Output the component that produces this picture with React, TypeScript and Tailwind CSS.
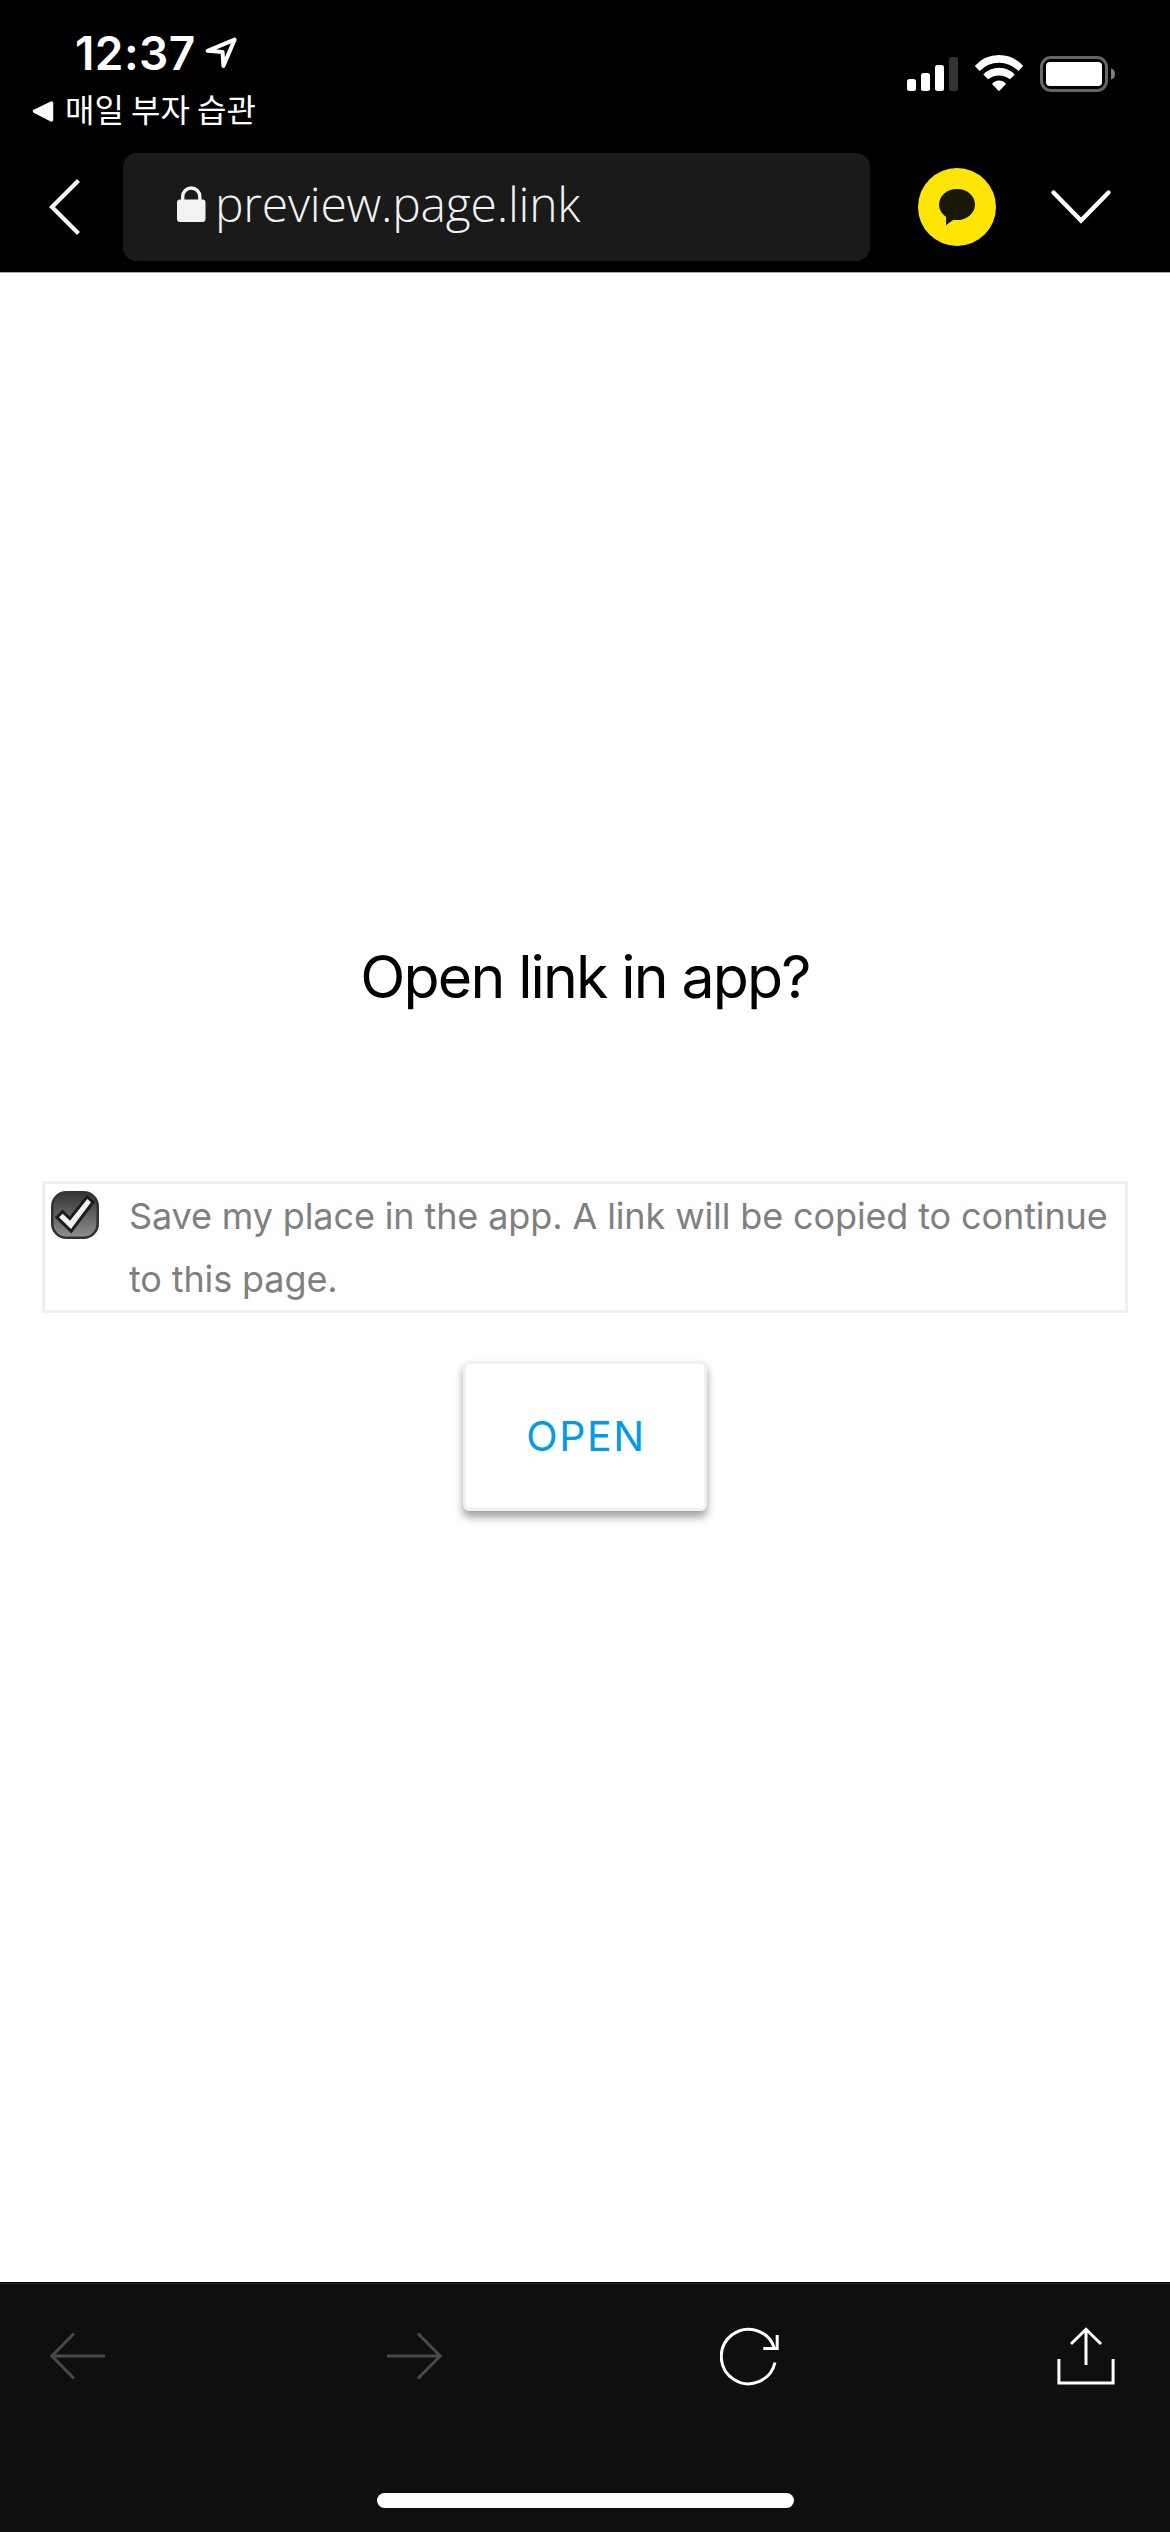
import type { ReactNode } from 'react';

type IconProps = { w: number; h: number; className?: string; children: ReactNode };

function Icon({ w, h, className = '', children }: IconProps) {
  return (
    <svg width={w} height={h} viewBox={`0 0 ${w} ${h}`} fill="none" className={`block shrink-0 ${className}`} aria-hidden="true">
      {children}
    </svg>
  );
}

function StatusBar() {
  return (
    <div className="flex h-[140px] justify-between">
      <div className="pt-[28px]">
        <div className="flex pl-[75px]">
          <span className="w-[129px] text-[46px] leading-[50px] font-semibold tracking-[0.4px]">12:37</span>
          {/* location arrow */}
          <Icon w={36} h={36} className="mt-[7px]">
            <path d="M3.6 15.8 30.6 4.6 19.4 31 18.6 17Z" stroke="#fff" strokeWidth="4" strokeLinejoin="round" />
          </Icon>
        </div>
        <div className="mt-[10px] flex pl-[31px]">
          <Icon w={34} h={40}>
            <path d="M3.5 23.3 20.5 15v17Z" fill="#fff" stroke="#fff" strokeWidth="3.5" strokeLinejoin="round" />
          </Icon>
          <span className="text-[32px] leading-[40px] whitespace-nowrap font-['Noto_Sans_CJK_KR',sans-serif]">매일 부자 습관</span>
        </div>
      </div>
      <div className="flex pt-[54px] pr-[54px]">
        {/* cellular */}
        <Icon w={53} h={40}>
          <rect x="1" y="25" width="9" height="12" rx="2.5" fill="#fff" />
          <rect x="15" y="19" width="9" height="18" rx="2.5" fill="#fff" />
          <rect x="29" y="11" width="9" height="26" rx="2.5" fill="#fff" />
          <rect x="43" y="3" width="9" height="34" rx="2.5" fill="#333" />
        </Icon>
        {/* wifi */}
        <Icon w={50} h={40} className="ml-[15px]">
          <g fill="#fff">
            <path d="M.8 12Q10.500 1 25 1T49.200 12L44.400 17Q36 8.700 25 8.700T5.600 17Z" />
            <path d="M9.300 20.500Q15.500 13.700 25 13.700T40.700 20.500L36 25.300Q31.300 21.500 25 21.500T14 25.300Z" />
            <path d="M18 30Q20.500 26.500 25 26.500T32 30L25 37.300Z" />
          </g>
        </Icon>
        {/* battery */}
        <Icon w={76} h={40} className="ml-[16px]">
          <rect x="1.500" y="3.500" width="65" height="33" rx="9.500" stroke="#666" strokeWidth="3" />
          <rect x="6" y="8" width="56" height="24" rx="4" fill="#fff" />
          <path d="M71 14.500q4 1 4 5.500t-4 5.500Z" fill="#808080" />
        </Icon>
      </div>
    </div>
  );
}

function AddressBar() {
  return (
    <div className="flex h-[132px] items-start pt-[13px]">
      <Icon w={123} h={108}>
        <path d="M78.500 27.500 52 54 78.500 80.500" stroke="#f4f4f4" strokeWidth="4.200" />
      </Icon>
      <div className="flex h-[108px] w-[747px] items-center rounded-[14px] bg-[#1a1a1a] pl-[54px] text-[#f2f2f2]">
        <Icon w={38} h={38} className="-mt-[6px]">
          <rect x="0" y="14.500" width="28.500" height="22.500" rx="3" fill="#f2f2f2" />
          <path d="M5.700 16v-4.500a8.550 8.550 0 0 1 17.100 0V16" stroke="#f2f2f2" strokeWidth="3.400" />
        </Icon>
        <span className="pb-[6px] text-[48px] leading-[66px] font-light tracking-[-0.22px] font-['Open_Sans',sans-serif]">
          preview.page.link
        </span>
      </div>
      <div className="mt-[15px] ml-[48px] flex size-[78px] items-center justify-center rounded-full bg-[#ffe506]">
        <Icon w={78} h={78}>
          <ellipse cx="39" cy="36.500" rx="18" ry="15.600" fill="#1a1700" />
          <path d="M28 46v11.200L36.500 51Z" fill="#1a1700" />
        </Icon>
      </div>
      <Icon w={66} h={108} className="ml-[52px]">
        <path d="M5.500 39.500 33 67.500 60.500 39.500" stroke="#fff" strokeWidth="4.400" strokeLinecap="round" />
      </Icon>
    </div>
  );
}

function Checkbox() {
  return (
    <Icon w={48} h={48} className="mt-[7px]">
      <defs>
        <linearGradient id="check-bg" x1="0" y1="0" x2="0" y2="1">
          <stop offset="0" stopColor="#343434" />
          <stop offset="1" stopColor="#909090" />
        </linearGradient>
      </defs>
      <rect x="1.300" y="1.300" width="45.400" height="45.400" rx="14" fill="url(#check-bg)" stroke="#333" strokeWidth="2.600" />
      <path
        d="M8 26.300 11.700 22.700 19 29.800 36.300 8 40 11.300 20 38Z"
        fill="#f2f2f2"
        stroke="#1c1c1c"
        strokeWidth="6"
        paintOrder="stroke"
      />
    </Icon>
  );
}

function Toolbar() {
  return (
    <footer className="h-[250px] border-t border-black bg-[#0f0f0f]">
      <div className="flex h-[148px] border-t border-[#242424] pl-[50px]">
        <Icon w={56} h={148}>
          <path d="M55 72H2M24 49.500 1.800 72 24 94.500" stroke="#4a4a4a" strokeWidth="3" />
        </Icon>
        <Icon w={56} h={148} className="ml-[281px]">
          <path d="M0 72h53M31 49.500 53.200 72 31 94.500" stroke="#4a4a4a" strokeWidth="3" />
        </Icon>
        <Icon w={60} h={148} className="ml-[277px]">
          <path d="M54.300 64A27.200 27.200 0 1 0 55 78.500" stroke="#fff" strokeWidth="3" />
          <path d="M57.200 51v13.500H43.300" stroke="#fff" strokeWidth="3" />
        </Icon>
        <Icon w={60} h={148} className="ml-[276px]">
          <path d="M2.900 75v24h54.200V75M30 81V45.500M15 60 30 45.300 45 60" stroke="#fff" strokeWidth="3" />
        </Icon>
      </div>
      <div className="mx-auto mt-[62px] h-[15px] w-[417px] rounded-full bg-white" />
    </footer>
  );
}

export default function App() {
  return (
    <div className="flex h-[2532px] w-[1170px] flex-col overflow-hidden bg-white font-['Inter','Noto_Sans_CJK_KR',sans-serif]">
      <header className="h-[272px] bg-black text-white">
        <StatusBar />
        <AddressBar />
      </header>
      <main className="flex flex-1 flex-col items-center border-t border-[#a8a6a7] px-[42px] pt-[669px]">
        <h1 className="text-[59px] leading-[70px] tracking-[-1.85px] text-black">Open link in app?</h1>
        <label className="mt-[169px] flex h-[132px] w-full border-3 border-[#efefef] pl-[6px] text-[36px] leading-[63px] tracking-[-0.12px] text-[#808080]">
          <Checkbox />
          <span className="ml-[30px] w-[990px] pt-px">Save my place in the app. A link will be copied to continue to this page.</span>
        </label>
        <button
          type="button"
          className="mt-[48px] h-[150px] w-[244px] rounded-[6px] border-3 border-[#f1f1f1] bg-white pt-[2px] pl-[2px] text-[41px] tracking-[1.6px] text-[#039be5] shadow-[0_6px_8px_rgba(0,0,0,0.38)]"
        >
          OPEN
        </button>
      </main>
      <Toolbar />
    </div>
  );
}
